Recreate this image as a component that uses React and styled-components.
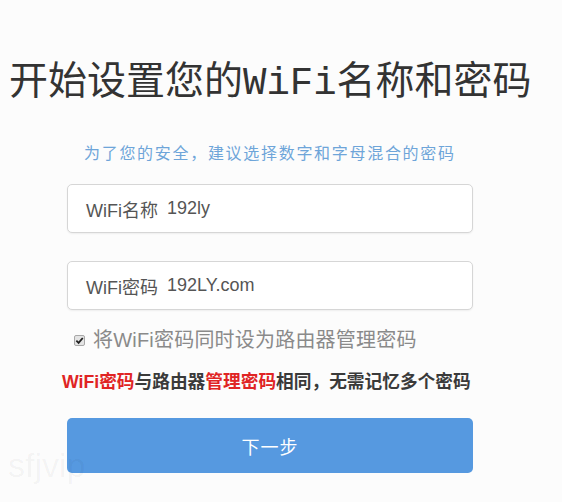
import React from 'react';
import styled, { createGlobalStyle } from 'styled-components';

const GlobalStyle = createGlobalStyle`
  html, body {
    margin: 0;
    padding: 0;
    background: #fcfcfc;
  }

  body {
    font-family: "Liberation Sans", "Noto Sans CJK SC", sans-serif;
  }
`

const Page = styled.div`
  position: relative;
  width: 562px;
  height: 502px;
  overflow: hidden;
  background: #fcfcfc;
  display: flex;
  flex-direction: column;
`

const Title = styled.h1`
  margin: 62px 0 0 9px;
  font-family: "Liberation Mono", "Noto Sans CJK SC", monospace;
  font-weight: 400;
  font-size: 39px;
  line-height: 44px;
  color: #333;
  white-space: nowrap;
`

const Form = styled.div`
  width: 406px;
  margin-left: 67px;
  display: flex;
  flex-direction: column;
`

const Hint = styled.p`
  margin: 36px 0 0;
  padding-left: 17px;
  font-size: 16px;
  line-height: 24px;
  letter-spacing: 1.7px;
  color: #6ea5d9;
  white-space: nowrap;
`

const Field = styled.div`
  box-sizing: border-box;
  height: 49px;
  margin-top: ${p => p.gap}px;
  padding: 0 18px;
  display: flex;
  align-items: center;
  gap: 9px;
  background: #fff;
  border: 1px solid #d6d6d6;
  border-radius: 5px;
  box-shadow: 0 1px 2px rgba(0, 0, 0, 0.06);
  font-size: 18px;
  color: #555;
`

const CheckRow = styled.label`
  margin-top: 17px;
  padding-left: 7px;
  display: flex;
  align-items: center;
  gap: 8px;
  font-size: 20px;
  line-height: 26px;
  letter-spacing: 0.2px;
  color: #8a8a8a;
  white-space: nowrap;
`

const Box = styled.span`
  box-sizing: border-box;
  width: 11px;
  height: 11px;
  border: 1px solid #a8a8a8;
  border-radius: 2px;
  background: #e4e4e4;
  display: flex;
  align-items: center;
  justify-content: center;
`

const Note = styled.p`
  margin: 17px 0 0 -5px;
  font-size: 17.7px;
  line-height: 24px;
  font-weight: 700;
  color: #3a3a3a;
  white-space: nowrap;
`

const Red = styled.span`
  color: #e02424;
`

const NextButton = styled.button`
  margin-top: 24px;
  height: 55px;
  border: none;
  border-radius: 5px;
  background: #5699e0;
  color: #fff;
  font-family: "Noto Sans CJK SC", sans-serif;
  font-size: 18px;
  letter-spacing: 1px;
  cursor: pointer;
`

const Watermark = styled.span`
  position: absolute;
  left: 8px;
  top: 446px;
  font-family: "Liberation Sans", sans-serif;
  font-size: 34px;
  color: rgba(0, 0, 0, 0.045);
  pointer-events: none;
`

const App = () => {
  return (
    <Page>
      <GlobalStyle />
      <Title>开始设置您的WiFi名称和密码</Title>

      <Form>
        <Hint>为了您的安全，建议选择数字和字母混合的密码</Hint>

        <Field gap={18}>
          <span>WiFi名称</span>
          <span>192ly</span>
        </Field>
        <Field gap={28}>
          <span>WiFi密码</span>
          <span>192LY.com</span>
        </Field>

        <CheckRow>
          <Box>
            <svg width="9" height="9" viewBox="0 0 10 10">
              <path d="M1.5 5.2 L4 7.6 L8.6 2.2" fill="none" stroke="#222" strokeWidth="2" />
            </svg>
          </Box>
          将WiFi密码同时设为路由器管理密码
        </CheckRow>

        <Note>
          <Red>WiFi密码</Red>与路由器<Red>管理密码</Red>相同，无需记忆多个密码
        </Note>

        <NextButton>下一步</NextButton>
      </Form>

      <Watermark>sfjvip</Watermark>
    </Page>
  );
};

export default App;
